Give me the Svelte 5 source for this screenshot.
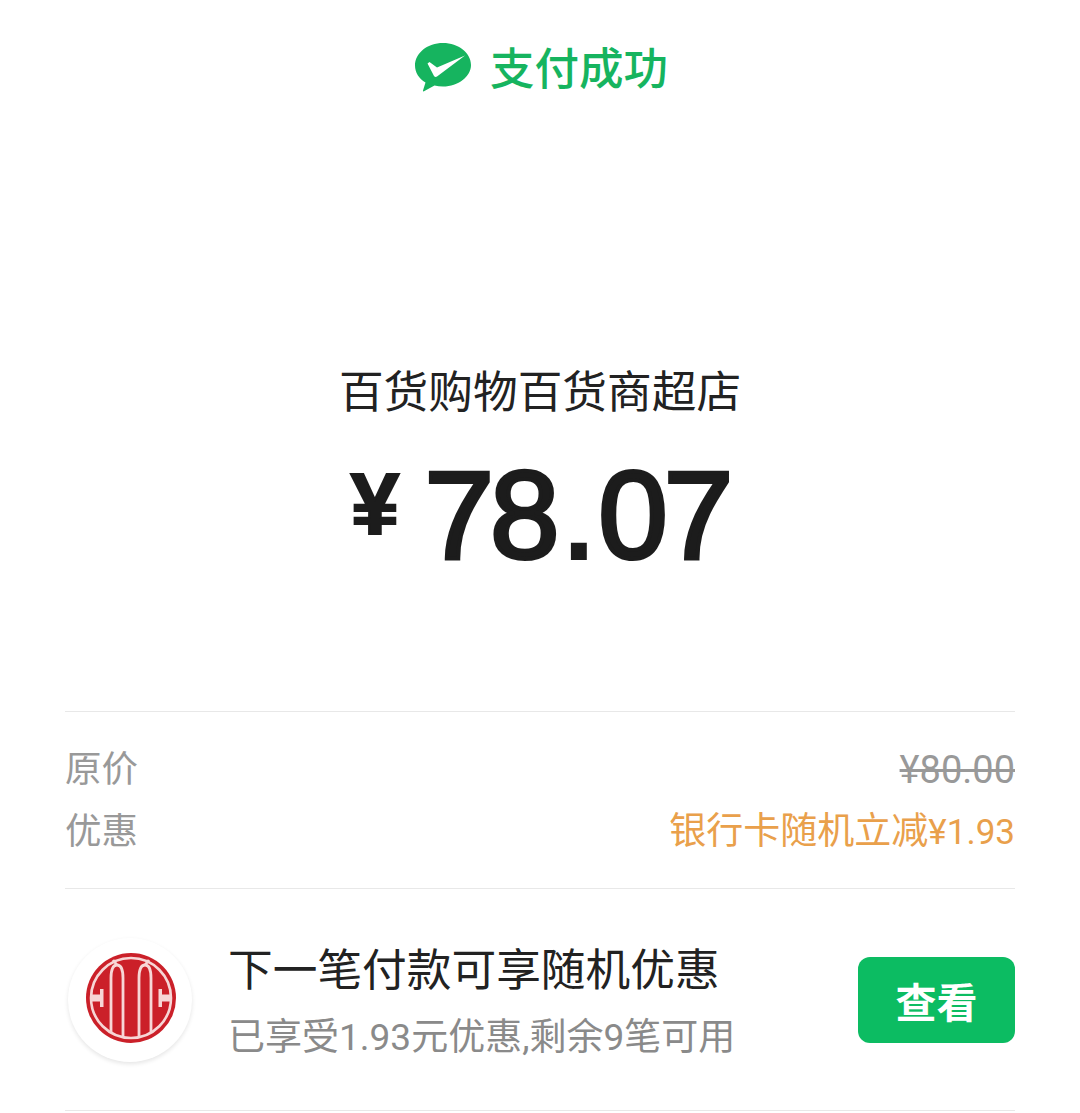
<script>
  const whole = '78'
  const cents = '07'
</script>

<div class="page">
  <div class="status">
    <svg class="wx" viewBox="0 0 56 50" width="56" height="50">
      <path d="M28 0C12.500 0 0 10 0 22.500c0 7 4 13 10.500 17L8 47.500c-.2.8.4 1.200 1 .8l10.500-5.700c2.700.6 5.500.9 8.500.9 15.500 0 28-10 28-21.500C56 10 43.500 0 28 0z" fill="#16b45f"/>
      <path d="M12.500 20.500l2-1.500 7.500 5.500L50 12.500 22 33.500c-1 .7-2.200.5-3-.6z" fill="#fff"/>
    </svg>
    <span class="status-text">支付成功</span>
  </div>

  <div class="merchant">百货购物百货商超店</div>
  <div class="amount">
    <span class="yen">¥</span>
    <span class="num">{whole}<span class="dot">.</span>{cents}</span>
  </div>

  <div class="rows">
    <div class="row">
      <span class="label">原价</span>
      <span class="orig">¥80.00</span>
    </div>
    <div class="row">
      <span class="label">优惠</span>
      <span class="discount">银行卡随机立减<span class="discount-num">¥1.93</span></span>
    </div>
  </div>

  <div class="promo">
    <div class="logo">
      <svg viewBox="0 0 90 90" width="90" height="90">
        <circle cx="45" cy="45" r="45" fill="#cb2029"/>
        <circle cx="45" cy="45" r="40" fill="none" stroke="#f7d6d6" stroke-width="2.600"/>
        <g fill="none" stroke="#f7d6d6" stroke-width="2.800">
          <path d="M25 80V25Q25 12 31 12Q37 12 37 25V84"/>
          <path d="M53 84V25Q53 12 59 12Q65 12 65 25V80"/>
          <path d="M31 12L27 7M59 12L63 7"/>
        </g>
        <path d="M5 41.500H14V36H17.500V54H14V48.500H5z" fill="#f7d6d6"/>
        <path d="M85 41.500H76V36H72.500V54H76V48.500H85z" fill="#f7d6d6"/>
      </svg>
    </div>
    <div class="promo-text">
      <div class="promo-title">下一笔付款可享随机优惠</div>
      <div class="promo-sub">已享受1.93元优惠,剩余9笔可用</div>
    </div>
    <button class="view">查看</button>
  </div>
</div>

<style>
  :global(body) {
    background: #fff;
  }

  .page {
    height: 1113px;
    padding: 0 65px;
    box-sizing: border-box;
    overflow: hidden;
    font-family: "Roboto", "Noto Sans CJK SC", sans-serif;
  }

  .status {
    display: flex;
    justify-content: center;
    align-items: center;
    gap: 19px;
    height: 50px;
    padding-top: 45px;
    padding-left: 3px;
  }

  .wx {
    margin-top: -4px;
  }

  .status-text {
    font-size: 44.500px;
    line-height: 50px;
    font-weight: 500;
    color: #16b45f;
  }

  .merchant {
    margin-top: 268px;
    text-align: center;
    font-size: 44.700px;
    line-height: 60px;
    color: #222;
  }

  .amount {
    margin-top: 18px;
    display: flex;
    justify-content: center;
    height: 150px;
    color: #1c1c1c;
    font-family: "Liberation Sans", sans-serif;
  }

  .yen {
    font-size: 88px;
    line-height: 100px;
    font-weight: 700;
    margin: 13px 24px 0 0;
    height: 100px;
    -webkit-text-stroke: 2px #1c1c1c;
  }

  .num {
    font-size: 125px;
    line-height: 148px;
    letter-spacing: -4px;
    padding-left: 1px;
    -webkit-text-stroke: 4px #1c1c1c;
  }

  .dot {
    margin: 0 6px;
  }

  .rows {
    margin-top: 120px;
    border-top: 1px solid #e8e8e8;
    border-bottom: 1px solid #e8e8e8;
    padding: 27px 0 21px;
    height: 128px;
  }

  .row {
    display: flex;
    justify-content: space-between;
    height: 62px;
    line-height: 62px;
    font-size: 36.500px;
  }

  .label {
    color: #999;
  }

  .orig {
    color: #999;
    font-size: 38px;
    text-decoration: line-through;
  }

  .discount {
    color: #e9a04b;
    font-size: 37px;
  }

  .discount-num {
    font-size: 35px;
  }

  .promo {
    display: flex;
    align-items: center;
    height: 221px;
    border-bottom: 1px solid #e8e8e8;
  }

  .logo {
    width: 124px;
    height: 124px;
    margin: 0 36px 0 3px;
    flex: none;
    border-radius: 50%;
    background: #fff;
    box-shadow: 0 2px 4px rgba(0, 0, 0, 0.1);
    display: flex;
    align-items: center;
    justify-content: center;
  }

  .logo svg {
    margin: -4px 0 0 2px;
  }

  .promo-text {
    flex: 1;
    padding-top: 4px;
  }

  .promo-title {
    font-size: 44.700px;
    line-height: 60px;
    color: #222;
  }

  .promo-sub {
    font-size: 37px;
    line-height: 50px;
    margin-top: 12px;
    color: #8a8a8a;
  }

  .view {
    width: 157px;
    height: 86px;
    border: none;
    border-radius: 12px;
    background: #0cbc62;
    color: #fff;
    font-family: inherit;
    font-size: 41px;
    font-weight: 700;
    padding: 0;
  }
</style>
